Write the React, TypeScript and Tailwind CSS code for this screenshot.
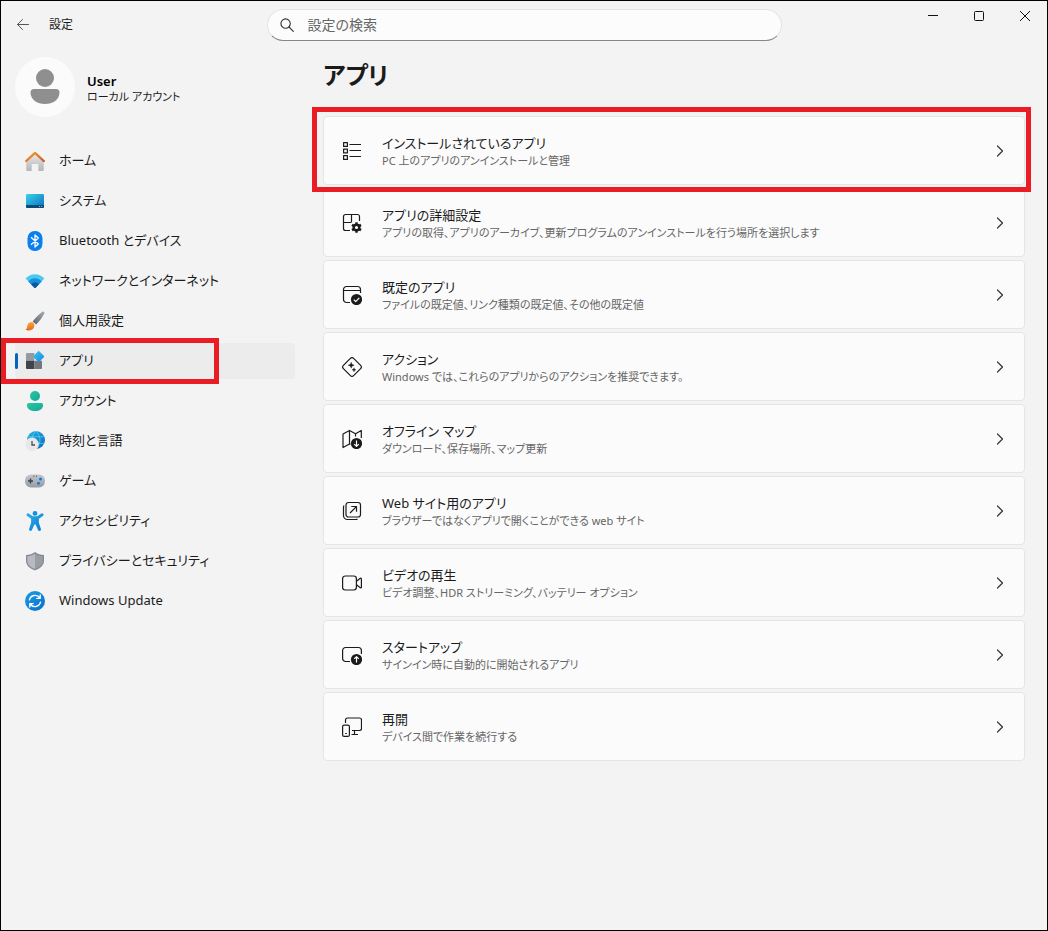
import { ReactNode, useState } from "react";

interface NavItem {
    id: string;
    label: string;
    icon: ReactNode;
}

interface SettingItem {
    title: string;
    description: string;
    icon: ReactNode;
    marked?: boolean;
}

const navItems: NavItem[] = [
    {
        id: 'home',
        label: 'ホーム',
        icon: (
            <>
                <path d="M1.200 10 10 2l8.800 8v8.700a1.300 1.300 0 0 1-1.300 1.300h-4.200v-6.200a.8.8 0 0 0-.8-.8H7.500a.8.8 0 0 0-.8.8V20H2.500a1.300 1.300 0 0 1-1.300-1.300z" fill="url(#homeBody)" />
                <path d="M1.200 10 10 1.900 18.800 10" fill="none" stroke="url(#homeRoof)" strokeWidth="2.300" strokeLinecap="round" strokeLinejoin="round" />
            </>
        ),
    },
    {
        id: 'system',
        label: 'システム',
        icon: (
            <>
                <rect x="1" y="3" width="18" height="14" rx="1.2" fill="url(#screen)" />
                <path d="M1 14h18v1.8a1.2 1.2 0 0 1-1.2 1.2H2.2A1.2 1.2 0 0 1 1 15.8z" fill="#0b4a73" />
                <circle cx="14.5" cy="15.5" r=".6" fill="#9fd6ee" />
                <circle cx="16.7" cy="15.5" r=".6" fill="#9fd6ee" />
            </>
        ),
    },
    {
        id: 'bluetooth',
        label: 'Bluetooth とデバイス',
        icon: (
            <>
                <rect x="2.5" y="0" width="15" height="20" rx="7.2" fill="#0a80f0" />
                <path d="M6.3 6.6 13.3 13 10 16V4l3.300 3L6.300 13.400" fill="none" stroke="#fff" strokeWidth="1.3" strokeLinejoin="round" strokeLinecap="round" />
            </>
        ),
    },
    {
        id: 'network',
        label: 'ネットワークとインターネット',
        icon: (
            <>
                <path d="M.6 7.6C5.8 1.8 14.2 1.8 19.4 7.6L10.6 16.7a.8.8 0 0 1-1.2 0z" fill="#4cc8f0" />
                <path d="M3.300 10.400c3.800-4.100 9.600-4.100 13.400 0l-6.100 6.300a.8.8 0 0 1-1.200 0z" fill="#1690dc" />
                <path d="M6.100 13.300c2.200-2.300 5.600-2.300 7.800 0l-3.300 3.400a.8.8 0 0 1-1.200 0z" fill="#0f559f" />
            </>
        ),
    },
    {
        id: 'personalization',
        label: '個人用設定',
        icon: (
            <>
                <path d="M17.300.8c1-.8 2.600.5 2 1.700-1.500 3.200-4.600 7.500-8.100 11.100L7.600 10.500C10.500 6.900 14.300 3 17.300.800z" fill="url(#brushHandle)" />
                <path d="M4.300 11.700c2-1.500 4.700-.5 5 2 .4 3.500-2.200 5.700-5.300 5.700-1.500 0-2.800-.3-3.600-1 1.800-.5 1.600-2 2-3.700.3-1.300.8-2.200 1.900-3z" fill="url(#brushTip)" />
            </>
        ),
    },
    {
        id: 'apps',
        label: 'アプリ',
        icon: (
            <>
                <path d="M1 3a1 1 0 0 1 1-1h7.300v7.800H1z" fill="#969ba3" />
                <path d="M1 9.800h8.300V18H2a1 1 0 0 1-1-1z" fill="#414449" />
                <path d="M9.300 9.800H17V17a1 1 0 0 1-1 1H9.300z" fill="#73777e" />
                <path d="M12.900.4a1.100 1.100 0 0 1 1.600 0l4.300 4.300a1.100 1.100 0 0 1 0 1.600l-4.300 4.300a1.100 1.100 0 0 1-1.600 0L8.600 6.300a1.100 1.100 0 0 1 0-1.600z" fill="url(#diamond)" />
            </>
        ),
    },
    {
        id: 'accounts',
        label: 'アカウント',
        icon: (
            <>
                <circle cx="10" cy="5" r="5" fill="url(#greenFill)" />
                <path d="M3.800 12h12.400a1.900 1.900 0 0 1 1.900 1.900C18.100 17.800 14.500 20 10 20s-8.100-2.200-8.100-6.100A1.900 1.900 0 0 1 3.800 12z" fill="url(#greenFill)" />
            </>
        ),
    },
    {
        id: 'time',
        label: '時刻と言語',
        icon: (
            <>
                <circle cx="11" cy="9" r="9" fill="url(#globe)" />
                <path d="M3 5.800h16M11 12.300h8.500M11 0c-5.300 5-5.300 13 0 18M11 0c5.300 5 5.300 13 0 18" fill="none" stroke="#66d8f4" strokeWidth=".9" opacity=".75" />
                <circle cx="7" cy="13.300" r="6.700" fill="#e8e8ea" />
                <path d="M7 10v4h3" fill="none" stroke="#4b4e54" strokeWidth="1.300" />
            </>
        ),
    },
    {
        id: 'gaming',
        label: 'ゲーム',
        icon: (
            <>
                <rect x="0" y="3.500" width="20" height="13" rx="6" fill="url(#pad)" />
                <path d="M5.500 7.500v5M3 10h5" stroke="#3c4148" strokeWidth="1.400" />
                <circle cx="15.500" cy="8" r="1.500" fill="#1679cf" />
                <circle cx="13.500" cy="12.200" r="1.500" fill="#1679cf" />
                <path d="M8.300 5.200h1M11 5.200h1" stroke="#3c4148" strokeWidth="1" />
            </>
        ),
    },
    {
        id: 'accessibility',
        label: 'アクセシビリティ',
        icon: (
            <>
                <circle cx="10" cy="2.400" r="2.400" fill="#1491df" />
                <path d="M3.700 2.600 7.800 5.300h4.400l4.100-2.700a1.400 1.400 0 0 1 1.500 2.400L13.900 7.800v3.900l2 6.300a1.450 1.450 0 0 1-2.800.900L10.600 13.500H9.400L6.900 18.900A1.450 1.450 0 0 1 4.100 18l2-6.300V7.800L2.200 5a1.400 1.400 0 0 1 1.500-2.400z" fill="url(#blueFill)" />
            </>
        ),
    },
    {
        id: 'privacy',
        label: 'プライバシーとセキュリティ',
        icon: (
            <>
                <path d="M10 1c2.600 2 5.400 3 9 3v5.500c0 4.500-3.200 8-9 9.900-5.800-1.900-9-5.400-9-9.900V4c3.600 0 6.400-1 9-3z" fill="#858a92" />
                <path d="M10 2.400v15.500c-4.900-1.700-7.700-4.500-7.700-8.400V5.200C5.300 5 7.800 4.100 10 2.400z" fill="#b7bbc0" />
                <path d="M10 2.400v15.500c4.900-1.700 7.700-4.500 7.700-8.400V5.200C14.700 5 12.200 4.100 10 2.400z" fill="#999ea6" />
            </>
        ),
    },
    {
        id: 'update',
        label: 'Windows Update',
        icon: (
            <>
                <circle cx="10" cy="10" r="10" fill="url(#updateFill)" />
                <path d="M4.500 8.800A5.700 5.700 0 0 1 14.800 7M15.500 11.200A5.700 5.700 0 0 1 5.200 13M15.200 4v3.400h-3.400M4.800 16v-3.400h3.400" fill="none" stroke="#fff" strokeWidth="1.400" strokeLinecap="round" strokeLinejoin="round" />
            </>
        ),
    },
];

const settingItems: SettingItem[] = [
    {
        title: 'インストールされているアプリ',
        description: 'PC 上のアプリのアンインストールと管理',
        marked: true,
        icon: (
            <>
                <path d="M1.600 1.600h3.800v3.800H1.600zM1.600 8.100h3.800v3.800H1.600zM1.600 14.600h3.800v3.800H1.600z" />
                <path d="M7.500 3.500h11.500M7.500 9.500h11.500M7.500 15.500h11.500" />
            </>
        ),
    },
    {
        title: 'アプリの詳細設定',
        description: 'アプリの取得、アプリのアーカイブ、更新プログラムのアンインストールを行う場所を選択します',
        icon: (
            <>
                <path d="M17.500 8V3.500a2 2 0 0 0-2-2h-12a2 2 0 0 0-2 2v12a2 2 0 0 0 2 2H8M9.500 1.500V9M1.500 9.500h8" />
                <circle cx="14.500" cy="14.500" r="2.800" strokeWidth="2.400" />
                <path d="M14.500 9.300v2M14.500 17.700v2M10 11.900l1.700 1M17.300 16.100l1.700 1M10 17.100l1.700-1M17.300 12.900l1.700-1" strokeWidth="2.400" />
            </>
        ),
    },
    {
        title: '既定のアプリ',
        description: 'ファイルの既定値、リンク種類の既定値、その他の既定値',
        icon: (
            <>
                <path d="M8 17.500H4.500a3 3 0 0 1-3-3v-10a3 3 0 0 1 3-3h11a3 3 0 0 1 3 3V8M1.500 5.500h17" />
                <circle cx="14.500" cy="14.500" r="5.600" fill="currentColor" stroke="none" />
                <path d="m11.800 14.700 1.900 1.900 3.600-3.700" stroke="#fff" />
            </>
        ),
    },
    {
        title: 'アクション',
        description: 'Windows では、これらのアプリからのアクションを推奨できます。',
        icon: (
            <>
                <path d="M8.400 1.400a2.300 2.300 0 0 1 3.200 0l7 7a2.300 2.300 0 0 1 0 3.200l-7 7a2.300 2.300 0 0 1-3.200 0l-7-7a2.300 2.300 0 0 1 0-3.200z" />
                <path d="M9.200 5.200c.5 2 1 2.500 3 3-2 .5-2.500 1-3 3-.5-2-1-2.500-3-3 2-.5 2.500-1 3-3zM12 10.800c.300 1.300.7 1.700 2 2-1.300.3-1.700.7-2 2-.3-1.300-.7-1.700-2-2 1.300-.3 1.700-.7 2-2z" fill="currentColor" strokeWidth=".4" />
            </>
        ),
    },
    {
        title: 'オフライン マップ',
        description: 'ダウンロード、保存場所、マップ更新',
        icon: (
            <>
                <path d="M7.500 15 1 18.500V5l6.500-3.500zM7.500 1.500l6 3.300M7.500 15l1 .4M13.500 7.500V4.800l5.800-3.300V9" />
                <circle cx="14.500" cy="14.500" r="5.600" fill="currentColor" stroke="none" />
                <path d="M14.500 11.500v5.700M12.200 15.100l2.300 2.300 2.300-2.300" stroke="#fff" />
            </>
        ),
    },
    {
        title: 'Web サイト用のアプリ',
        description: 'ブラウザーではなくアプリで開くことができる web サイト',
        icon: (
            <>
                <rect x="4" y="1.500" width="14.500" height="14.500" rx="2.500" />
                <path d="M2 4.500a3 3 0 0 0-.5 1.700v8.300a4 4 0 0 0 4 4h8.300a3 3 0 0 0 1.700-.5M8 12l6.300-6.300M9.300 5.500h5.200v5.200" />
            </>
        ),
    },
    {
        title: 'ビデオの再生',
        description: 'ビデオ調整、HDR ストリーミング、バッテリー オプション',
        icon: (
            <>
                <rect x=".6" y="3" width="13.800" height="14" rx="2.700" />
                <path d="m14.500 8.200 3.800-2.900c.5-.4 1.100-.1 1.100.500v8.400c0 .6-.6.9-1.100.500l-3.800-2.900" />
            </>
        ),
    },
    {
        title: 'スタートアップ',
        description: 'サインイン時に自動的に開始されるアプリ',
        icon: (
            <>
                <path d="M8 16.500H3.600a3 3 0 0 1-3-3v-8a3 3 0 0 1 3-3h12.800a3 3 0 0 1 3 3V9" />
                <circle cx="14.500" cy="14.500" r="5.600" fill="currentColor" stroke="none" />
                <path d="M14.500 17.500v-5.700M12.200 13.900l2.300-2.300 2.300 2.300" stroke="#fff" />
            </>
        ),
    },
    {
        title: '再開',
        description: 'デバイス間で作業を続行する',
        icon: (
            <>
                <path d="M3.500 6V3a2 2 0 0 1 2-2h12a2 2 0 0 1 2 2v8.500a2 2 0 0 1-2 2H10M12.500 13.500v4M9.500 17.500h6.500" />
                <rect x=".6" y="8.200" width="6.800" height="11.200" rx="1.500" />
                <path d="M3.200 16.500h1.600" />
            </>
        ),
    },
];

const Gradients = () => (
    <svg className="absolute size-0" aria-hidden="true">
        <defs>
            <linearGradient id="homeRoof" x1="0" y1="0" x2="1" y2="1">
                <stop offset="0" stopColor="#f3a02d" />
                <stop offset="1" stopColor="#cf5a20" />
            </linearGradient>
            <linearGradient id="homeBody" x1="0" y1="0" x2="0" y2="1">
                <stop offset="0" stopColor="#e9e9ea" />
                <stop offset="1" stopColor="#b4b6b9" />
            </linearGradient>
            <linearGradient id="screen" x1="0" y1="0" x2="1" y2="1">
                <stop offset="0" stopColor="#37d3ea" />
                <stop offset="1" stopColor="#0b6fc0" />
            </linearGradient>
            <linearGradient id="brushHandle" x1="1" y1="0" x2="0" y2="1">
                <stop offset="0" stopColor="#a9adb3" />
                <stop offset="1" stopColor="#5b6068" />
            </linearGradient>
            <linearGradient id="brushTip" x1="0" y1="0" x2="0" y2="1">
                <stop offset="0" stopColor="#f9a53a" />
                <stop offset="1" stopColor="#e8681a" />
            </linearGradient>
            <linearGradient id="blueFill" x1="0" y1="0" x2="1" y2="1">
                <stop offset="0" stopColor="#2bb0ee" />
                <stop offset="1" stopColor="#0c78d0" />
            </linearGradient>
            <linearGradient id="diamond" x1="0" y1="0" x2="1" y2="1">
                <stop offset="0" stopColor="#45c6f5" />
                <stop offset="1" stopColor="#1285dc" />
            </linearGradient>
            <linearGradient id="greenFill" x1="0" y1="0" x2="1" y2="1">
                <stop offset="0" stopColor="#2cc79f" />
                <stop offset="1" stopColor="#12a899" />
            </linearGradient>
            <linearGradient id="globe" x1="0" y1="0" x2="1" y2="1">
                <stop offset="0" stopColor="#1fb6e4" />
                <stop offset="1" stopColor="#1266bd" />
            </linearGradient>
            <linearGradient id="pad" x1="0" y1="0" x2="0" y2="1">
                <stop offset="0" stopColor="#c3c8ce" />
                <stop offset="1" stopColor="#959ba3" />
            </linearGradient>
            <linearGradient id="updateFill" x1="0" y1="0" x2="1" y2="1">
                <stop offset="0" stopColor="#1d9be3" />
                <stop offset="1" stopColor="#0a6fcb" />
            </linearGradient>
        </defs>
    </svg>
)

const App = () => {

    const [active, setActive] = useState('apps');
    const [search, setSearch] = useState('');

    return (
        <div lang="ja" className="flex flex-col min-h-screen border border-black bg-[#f3f3f3] text-[#1b1b1b] font-['Noto_Sans','Noto_Sans_CJK_JP',sans-serif] [font-feature-settings:'palt']">
            <Gradients />
            <header className="grid grid-cols-[1fr_minmax(0,515px)_1fr] h-[47px]">
                <div className="flex items-center gap-3.5 pl-2.5">
                    <button type="button" aria-label="戻る" className="flex items-center justify-center w-6 h-6">
                        <svg width="12" height="12" viewBox="0 0 12 12" fill="none" stroke="#555" strokeLinecap="round" strokeLinejoin="round">
                            <path d="M11.500 5.500H.500M5.500.5l-5 5 5 5" />
                        </svg>
                    </button>
                    <span className="text-xs">設定</span>
                </div>
                <label className="flex items-center gap-3.5 self-center h-8 px-3 rounded-full bg-[#fcfcfc] border border-[#e3e3e3] border-b-[#868686]">
                    <svg className="shrink-0" width="14" height="14" viewBox="0 0 14 14" fill="none" stroke="#333" strokeWidth="1.100" strokeLinecap="round">
                        <circle cx="5.600" cy="5.600" r="4.700" />
                        <path d="m9 9 4.300 4.300" />
                    </svg>
                    <input
                        type="text"
                        aria-label="設定の検索"
                        value={search}
                        onChange={(e) => setSearch(e.target.value)}
                        placeholder="設定の検索"
                        className="w-full bg-transparent text-sm leading-5 outline-none placeholder:text-[#666]"
                    />
                </label>
                <div className="flex justify-end">
                    <button type="button" aria-label="最小化" className="flex items-center justify-center w-[46px] h-[30px]">
                        <svg width="10" height="10" viewBox="0 0 10 10" stroke="#111"><path d="M0 4.500h10" /></svg>
                    </button>
                    <button type="button" aria-label="最大化" className="flex items-center justify-center w-[46px] h-[30px]">
                        <svg width="10" height="10" viewBox="0 0 10 10" fill="none" stroke="#111"><rect x=".5" y=".5" width="9" height="9" rx="1" /></svg>
                    </button>
                    <button type="button" aria-label="閉じる" className="flex items-center justify-center w-[46px] h-[30px] -mr-px">
                        <svg width="10" height="10" viewBox="0 0 10 10" stroke="#111"><path d="m0 0 10 10M10 0 0 10" /></svg>
                    </button>
                </div>
            </header>

            <div className="flex flex-1 gap-7 pt-[9px] pl-3.5 pr-[22px] pb-6">
                <aside className="w-[280px] shrink-0">
                    <div className="flex items-center gap-3">
                        <svg className="rounded-full bg-[#fbfbfb]" width="60" height="60" viewBox="0 0 60 60" fill="#8f8f8f">
                            <circle cx="30" cy="21" r="9" />
                            <path d="M19 32h22a3.500 3.500 0 0 1 3.500 3.500C44.500 42.500 38 47 30 47s-14.500-4.500-14.500-11.500A3.500 3.500 0 0 1 19 32z" />
                        </svg>
                        <div className="pt-1">
                            <p className="text-[13px] leading-4 font-semibold text-black">User</p>
                            <p className="text-[11px] leading-4">ローカル アカウント</p>
                        </div>
                    </div>
                    <nav className="flex flex-col gap-1 mt-[26px]">
                        {navItems.map((item) => (
                            <div key={item.id} className="relative">
                                <button
                                    type="button"
                                    onClick={() => setActive(item.id)}
                                    className={`relative flex items-center gap-3.5 w-full h-9 pl-2.5 rounded text-[13px] text-left ${active === item.id ? 'bg-[#ececec]' : ''}`}
                                >
                                    {active === item.id && <span className="absolute left-0 top-2.5 w-[3px] h-4 rounded-full bg-[#0067c0]" />}
                                    <svg width="20" height="20" viewBox="0 0 20 20" aria-hidden="true">{item.icon}</svg>
                                    <span>{item.label}</span>
                                </button>
                                {item.id === 'apps' && <span className="absolute -left-3.5 -top-[5px] -bottom-[5px] w-[218px] border-5 border-[#ea1c24] pointer-events-none" />}
                            </div>
                        ))}
                    </nav>
                </aside>

                <main className="flex-1 min-w-0">
                    <h1 className="text-2xl leading-9 font-semibold">アプリ</h1>
                    <div className="flex flex-col gap-[3px] mt-[23px]">
                        {settingItems.map((item) => (
                            <div key={item.title} className="relative">
                                <button type="button" className="flex items-center gap-5 w-full min-h-[69px] px-[18px] rounded border border-[#e5e5e5] bg-[#fbfbfb] text-left">
                                    <svg className="shrink-0" width="20" height="20" viewBox="0 0 20 20" fill="none" stroke="currentColor" strokeWidth="1.200" strokeLinejoin="round" aria-hidden="true">{item.icon}</svg>
                                    <span className="flex flex-col flex-1 min-w-0">
                                        <span className="text-[13px] leading-5">{item.title}</span>
                                        <span className="text-[11px] leading-4 text-[#666]">{item.description}</span>
                                    </span>
                                    <svg className="shrink-0" width="12" height="12" viewBox="0 0 12 12" fill="none" stroke="#333" strokeWidth="1.200" strokeLinecap="round" strokeLinejoin="round">
                                        <path d="m3.500 1 5 5-5 5" />
                                    </svg>
                                </button>
                                {item.marked && <span className="absolute -left-[11px] -right-1.5 -top-[9px] -bottom-[7px] z-10 border-5 border-[#ea1c24] pointer-events-none" />}
                            </div>
                        ))}
                    </div>
                </main>
            </div>
        </div>
    )

}

export default App;
